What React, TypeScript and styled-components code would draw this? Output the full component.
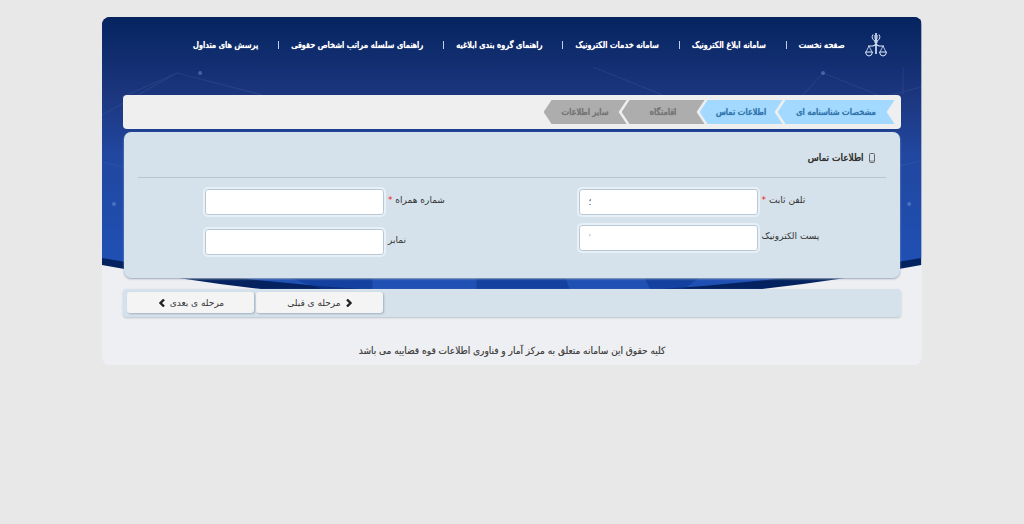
import React from "react";
import styled, { createGlobalStyle } from "styled-components";

const Global = createGlobalStyle`
  * { box-sizing: border-box; }
  body { margin: 0; background: #e8e8e8; font-family: "DejaVu Sans", sans-serif; color: #333; }
  button, input { font-family: inherit; }
`;

const condensed = `"DejaVu Sans Condensed", "DejaVu Sans", sans-serif`;

const Page = styled.div`
  position: relative;
  isolation: isolate;
  width: 80%;
  margin: 17px auto 0;
  padding: 0 21px;
  border-radius: 8px;
  background: #eeeff2;
  overflow: hidden;
`;

const Backdrop = styled.svg`
  position: absolute;
  z-index: -1;
  top: 0;
  left: 0;
  width: 100%;
  height: 290px;
`;

const Header = styled.header`
  display: flex;
  align-items: center;
  height: 78px;
  padding: 0 14px 22px 0;
`;

const Emblem = styled.svg`
  width: 22px;
  height: 26px;
  margin-left: 20px;
  flex: none;
`;

const Nav = styled.nav`
  display: flex;
  align-items: center;
`;

const NavLink = styled.a`
  color: #fff;
  font-family: ${condensed};
  font-size: 9px;
  line-height: 16px;
  text-shadow: 0 0 0 #fff, 0 0 1px #fff;
  text-decoration: none;
  white-space: nowrap;
  & + &::before {
    content: "";
    display: inline-block;
    width: 1px;
    height: 8px;
    margin: 0 12px 0 20px;
    background: #c5cee6;
    vertical-align: -1px;
  }
`;

const Steps = styled.ol`
  display: flex;
  list-style: none;
  height: 34px;
  margin: 0;
  padding: 5px 6px;
  border-radius: 4px;
  background: #efefef;
`;

const Step = styled.li<{ $done?: boolean; $wide?: boolean }>`
  display: flex;
  align-items: center;
  justify-content: center;
  width: ${(p) => (p.$wide ? 117 : 83)}px;
  margin-left: -5px;
  font-family: ${condensed};
  font-size: 9px;
  line-height: 16px;
  text-shadow: 0 0 0 currentColor, 0 0 1px currentColor;
  white-space: nowrap;
  color: ${(p) => (p.$done ? "#3577ab" : "#757575")};
  background: ${(p) => (p.$done ? "#a3d9ff" : "#adadad")};
  clip-path: polygon(8px 0, 100% 0, calc(100% - 8px) 50%, 100% 100%, 8px 100%, 0 50%);
`;

const Panel = styled.section`
  margin: 3px 1px 0;
  padding: 18px 14px 23px;
  border-radius: 7px;
  background: #d5e2eb;
  box-shadow: 0 1px 2px #9aaabb;
`;

const PanelTitle = styled.h2`
  display: flex;
  align-items: center;
  gap: 4px;
  height: 28px;
  margin: 0;
  padding: 0 10px 12px;
  border-bottom: 1px solid #bcc5cc;
  font-family: ${condensed};
  font-size: 10px;
  line-height: 16px;
  font-weight: normal;
  text-shadow: 0 0 0 currentColor, 0 0 1px #999;
`;

const Columns = styled.div`
  display: grid;
  grid-template-columns: 1fr 1fr;
  padding-top: 11px;
`;

const Column = styled.div<{ $gap: number }>`
  display: flex;
  flex-direction: column;
  gap: ${(p) => p.$gap}px;
`;

const Field = styled.div`
  display: flex;
  gap: 4px;
`;

const Label = styled.label`
  width: 124px;
  padding-top: 3px;
  font-size: 9px;
  line-height: 16px;
  text-align: left;
  white-space: nowrap;
`;

const Required = styled.span`
  color: #e22;
`;

const TextBox = styled.input<{ $faint?: boolean }>`
  width: 179px;
  height: 26px;
  padding: 0 9px;
  border: 1px solid #b9cad6;
  border-radius: 3px;
  outline: 2px solid #e6f0f6;
  background: #fff;
  font-size: 9px;
  color: ${(p) => (p.$faint ? "#aab" : "#334")};
  direction: ltr;
`;

const Actions = styled.div`
  display: flex;
  justify-content: flex-end;
  gap: 2px;
  height: 28px;
  margin-top: 11px;
  padding: 3px 4px;
  border-radius: 4px;
  background: #d5e2eb;
  box-shadow: 0 1px 2px #b9c3cc;
`;

const Button = styled.button`
  display: flex;
  align-items: center;
  justify-content: center;
  gap: 4px;
  width: 127px;
  height: 21px;
  padding: 0;
  border: 0;
  border-radius: 3px;
  background: #f4f4f5;
  box-shadow: 1px 1px 2px #9fb0bd;
  color: #333;
  font-size: 9px;
  line-height: 16px;
`;

const Footer = styled.footer`
  padding: 26px 0 6px;
  font-family: ${condensed};
  font-size: 10px;
  line-height: 16px;
  text-align: center;
  color: #444;
  text-shadow: 0 0 0 #888;
`;

const Chevron = ({ back = false }: { back?: boolean }) => (
  <svg width="8" height="8" viewBox="0 0 8 8" aria-hidden="true">
    <path
      d={back ? "M2 0.5 L5.5 4 L2 7.5" : "M6 0.5 L2.5 4 L6 7.5"}
      fill="none"
      stroke="#222"
      strokeWidth="2.4"
    />
  </svg>
);

const links = [
  "صفحه نخست",
  "سامانه ابلاغ الکترونیک",
  "سامانه خدمات الکترونیک",
  "راهنمای گروه بندی ابلاغیه",
  "راهنمای سلسله مراتب اشخاص حقوقی",
  "پرسش های متداول",
];

export default function App() {
  return (
    <>
      <Global />
      <Page dir="rtl">
        <Backdrop viewBox="0 0 818 290" preserveAspectRatio="none" aria-hidden="true">
          <defs>
            <linearGradient id="sky" x1="0" y1="0" x2="0" y2="1">
              <stop offset="0" stopColor="#05245f" />
              <stop offset="0.28" stopColor="#1c367e" />
              <stop offset="0.5" stopColor="#2147a0" />
              <stop offset="0.9" stopColor="#1f50b4" />
            </linearGradient>
          </defs>
          <path d="M0 0H818V248Q409 325 0 248Z" fill="#042260" />
          <path d="M0 0H818V241Q409 313 0 241Z" fill="url(#sky)" />
          <path d="M180 258H270V276H230ZM374 258H462L468 276H374ZM540 258H600L580 273H548Z" fill="#0d3592" opacity="0.6" />
          <g stroke="#6f93d8" fill="none" opacity="0.14">
            <path d="M0 98L75 56L20 80M75 56L160 78M490 50L560 78M720 56L700 78M720 56L780 80L818 70M800 50V78M0 145L30 152M790 150L818 144" />
          </g>
          <g fill="#86aae8" opacity="0.4">
            <circle cx="98" cy="56" r="2" />
            <circle cx="720" cy="56" r="2" />
            <circle cx="12" cy="187" r="2" />
            <circle cx="806" cy="187" r="2" />
          </g>
        </Backdrop>
        <Header>
          <Emblem viewBox="0 0 22 26" fill="none" stroke="#dfe9ff" role="img" aria-label="قوه قضاییه">
            <path d="M8 2.500Q5.500 6.500 10 9M14 2.500Q16.500 6.500 12 9" />
            <path d="M9.500 3Q8.500 6 11 8.500Q13.500 6 12.500 3" strokeWidth="0.600" />
            <path d="M11 1V22" strokeWidth="1.600" />
            <path d="M9 10H13M3 14H8L11 12.500L14 14H19" strokeWidth="1.200" />
            <path d="M4 14L1 20M4 14L7 20M18 14L15 20M18 14L21 20" strokeWidth="0.800" />
            <path d="M0.500 20H7.500Q7 24 4 24T0.500 20ZM14.500 20H21.500Q21 24 18 24T14.500 20Z" />
          </Emblem>
          <Nav>
            {links.map((text) => (
              <NavLink href="#" key={text}>{text}</NavLink>
            ))}
          </Nav>
        </Header>
        <Steps>
          <Step $done $wide>مشخصات شناسنامه ای</Step>
          <Step $done>اطلاعات تماس</Step>
          <Step>اقامتگاه</Step>
          <Step>سایر اطلاعات</Step>
        </Steps>
        <Panel>
          <PanelTitle>
            <svg width="8" height="10" viewBox="0 0 8 10" fill="none" stroke="#666" aria-hidden="true">
              <rect x="1.500" y="0.500" width="5" height="9" rx="1" />
              <path d="M2 8H6" strokeWidth="0.700" />
            </svg>
            اطلاعات تماس
          </PanelTitle>
          <Columns>
            <Column $gap={10}>
              <Field>
                <Label htmlFor="phone">تلفن ثابت <Required>*</Required></Label>
                <TextBox id="phone" defaultValue="؛" />
              </Field>
              <Field>
                <Label htmlFor="email">پست الکترونیک</Label>
                <TextBox id="email" $faint defaultValue="'" />
              </Field>
            </Column>
            <Column $gap={14}>
              <Field>
                <Label htmlFor="mobile">شماره همراه <Required>*</Required></Label>
                <TextBox id="mobile" />
              </Field>
              <Field>
                <Label htmlFor="fax">نمابر</Label>
                <TextBox id="fax" />
              </Field>
            </Column>
          </Columns>
        </Panel>
        <Actions>
          <Button type="button"><Chevron back />مرحله ی قبلی</Button>
          <Button type="button">مرحله ی بعدی<Chevron /></Button>
        </Actions>
        <Footer>کلیه حقوق این سامانه متعلق به مرکز آمار و فناوری اطلاعات قوه قضاییه می باشد</Footer>
      </Page>
    </>
  );
}
